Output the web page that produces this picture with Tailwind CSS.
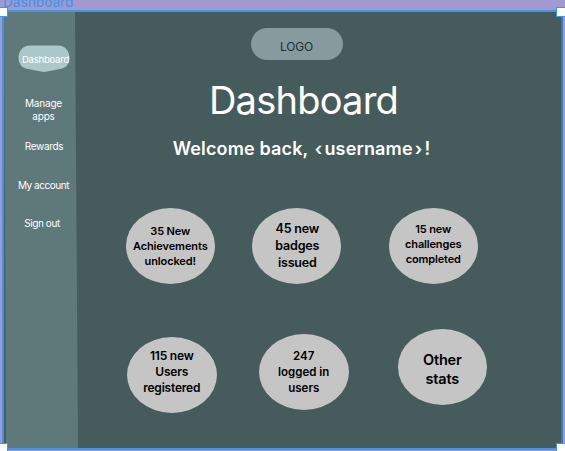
<!DOCTYPE html>
<html lang="en">
<head>
<meta charset="utf-8">
<title>Dashboard</title>
<script src="https://cdn.jsdelivr.net/npm/@tailwindcss/browser@4"></script>
</head>
<body class="relative h-[451px] w-[565px] overflow-hidden bg-[#a299d1] font-['Inter','Open_Sans',sans-serif]">
  <header class="flex h-[10px] items-end overflow-hidden pl-[3px]">
    <div class="h-[16px] text-[13.500px] leading-[16px] font-medium text-[#4595e6]">Dashboard</div>
  </header>
  <div class="ml-[2px] flex h-[440px] w-[561px] border-2 border-[#4295e5] border-r-[#347eb8] bg-[#465b5c]">
    <nav class="flex h-full w-[74px] shrink-0 flex-col items-center bg-[#5f797a] pr-[2px] text-center text-[10px] leading-[13px] text-white [clip-path:polygon(0_0,71px_0,74px_100%,2px_100%)]">
      <div class="relative mt-[33px] ml-[7px] flex h-[28px] w-[52px] shrink-0 justify-center pt-[8px]">
        <svg class="absolute inset-0" width="52" height="28" viewBox="0 0 52 28"><path d="M12 .5H40C47 .5 51.500 6 51.500 13C51.500 19 48 23 42 24L29 26.500Q26 27.300 23 26.500L10 24C4 23 .5 19 .5 13C.5 6 5 .5 12 .5Z" fill="#abc7ca"/></svg>
        <span class="relative ml-[4px] text-[9.500px] leading-[13px] tracking-[-0.2px]">Dashboard</span>
      </div>
      <a class="mt-[24px] ml-[7px] tracking-[-0.2px]">Manage<br>apps</a>
      <a class="mt-[17px] ml-[8px] tracking-[-0.3px]">Rewards</a>
      <a class="mt-[26px] ml-[7px] whitespace-nowrap tracking-[-0.45px]">My account</a>
      <a class="mt-[25px] ml-[4px] tracking-[-0.4px]">Sign out</a>
    </nav>
    <main class="flex-1 text-black">
      <div class="mt-[16px] ml-[172.500px] flex h-[32px] w-[92px] items-center justify-center rounded-full bg-[#869b9e] pt-[5px] text-[12px] tracking-[-0.2px] text-[#1d2f31]">LOGO</div>
      <h1 class="mt-[17px] ml-[-32px] text-center text-[38px] leading-[46px] tracking-[-0.75px] whitespace-nowrap text-white">Dashboard</h1>
      <p class="mt-[14px] ml-[-36px] text-center text-[18px] leading-[24px] font-semibold tracking-[0.15px] whitespace-nowrap text-white">Welcome back, <span class="mr-[2px] ml-[2px]">‹</span>username<span class="mr-[2px] ml-[2px]">›</span>!</p>
      <section class="mt-[46.500px] ml-[47.500px] flex items-start text-center font-semibold">
        <div class="flex h-[76px] w-[89.500px] shrink-0 items-center justify-center rounded-[50%] bg-[#c5c5c5] pt-[2px] text-[11px] leading-[14.700px] tracking-[-0.1px]">35 New<br>Achievements<br>unlocked!</div>
        <div class="ml-[36.500px] flex h-[76px] w-[89.500px] shrink-0 items-center justify-center rounded-[50%] bg-[#c5c5c5] pl-[2px] text-[12.500px] leading-[17px] tracking-[-0.2px]">45 new<br>badges<br>issued</div>
        <div class="ml-[47.500px] flex h-[76px] w-[89.500px] shrink-0 items-center justify-center rounded-[50%] bg-[#c5c5c5] pb-[2px] text-[11px] leading-[14.700px] tracking-[-0.15px]">15 new<br>challenges<br>completed</div>
      </section>
      <section class="mt-[45.500px] ml-[49px] flex items-start text-center font-semibold">
        <div class="mt-[8px] flex h-[76px] w-[89.500px] shrink-0 items-center justify-center rounded-[50%] bg-[#c5c5c5] pb-[6px] text-[12px] leading-[16px] tracking-[-0.2px]">115 new<br>Users<br>registered</div>
        <div class="mt-[5px] ml-[42.500px] flex h-[76px] w-[89.500px] shrink-0 items-center justify-center rounded-[50%] bg-[#c5c5c5] text-[11.500px] leading-[16px]">247<br>logged in<br>users</div>
        <div class="ml-[49px] flex h-[76px] w-[89.500px] shrink-0 items-center justify-center rounded-[50%] bg-[#c5c5c5] pt-[4px] text-[14.500px] leading-[19px] tracking-[-0.2px]">Other<br>stats</div>
      </section>
    </main>
  </div>
  <i class="absolute top-[7px] -left-[2px] size-[10px] border border-[#4295e5] bg-white"></i>
  <i class="absolute top-[7px] left-[556px] size-[10px] border border-[#4295e5] bg-white"></i>
  <i class="absolute top-[443px] -left-[2px] size-[10px] border border-[#4295e5] bg-white"></i>
  <i class="absolute top-[443px] left-[556px] size-[10px] border border-[#4295e5] bg-white"></i>
</body>
</html>
